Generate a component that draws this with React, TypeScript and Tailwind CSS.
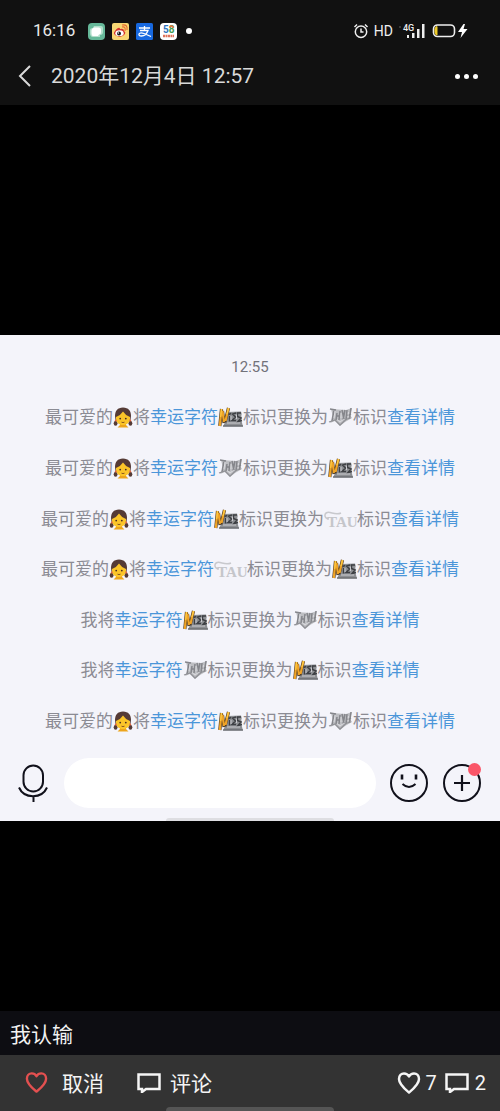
import type { ReactNode } from "react";

function Girl() {
  return (
    <svg viewBox="0 0 20 22" className="inline-block h-[22px] w-5 shrink-0" aria-label="女孩" role="img">
      <path d="M10 1.500C4.500 1.500 2 5 2 10L2.500 14H17.500L18 10C18 5 15.500 1.500 10 1.500Z" fill="#553b36" />
      <ellipse cx="2.600" cy="17.300" rx="1.900" ry="2.500" fill="#553b36" />
      <ellipse cx="17.400" cy="17.300" rx="1.900" ry="2.500" fill="#553b36" />
      <path d="M7 17H13V19L15.500 21.500H4.500L7 19Z" fill="#eda51c" />
      <path d="M3 11Q7.500 9.500 10 5.500Q12.500 9.500 17 11V12.500C17 16.500 14 19 10 19C6 19 3 16.500 3 12.500Z" fill="#fbc529" />
      <circle cx="2.800" cy="14.500" r="1" fill="#e2653f" />
      <circle cx="17.200" cy="14.500" r="1" fill="#e2653f" />
      <circle cx="7.200" cy="12.600" r=".9" fill="#4a2e20" />
      <circle cx="12.800" cy="12.600" r=".9" fill="#4a2e20" />
      <path d="M8.500 16.200Q10 17 11.500 16.200" fill="none" stroke="#7a4a20" strokeWidth=".9" />
    </svg>
  );
}

function GoldMark() {
  return (
    <svg viewBox="0 0 25 22" className="inline-block h-[22px] w-[25px] shrink-0" aria-hidden="true">
      <path d="M9 6L23 5.500L24 9L23.500 15L25 20.500H5L8 14Z" fill="#8d8f93" />
      <path d="M3.500 3L1.800 20M4.500 5L6 17M10.500 2L7 16" stroke="#4a3a28" strokeWidth="3.200" />
      <path d="M3.500 3L1.800 20M4.500 5L6 16M10.500 2L7.500 15" stroke="#f0a426" strokeWidth="2.200" />
      <path d="M3.500 3L2.700 11M10.500 2L9 8" stroke="#ffd34a" strokeWidth="1" />
      <path d="M10.500 8.500L13 7.500M11.500 10V15.500M18 7L14.500 8L17.500 11L14 14.500H18M23 7H19.500V10.500L23 12L20 15.500L24 14.500" fill="none" stroke="#3d3f43" strokeWidth="1.400" />
      <path d="M13 10V14M18.500 8.500V13M23.500 8.500V11M9 17H22" fill="none" stroke="#d2d3d7" strokeWidth=".9" />
      <path d="M5 20H25" stroke="#65676b" strokeWidth="1.200" />
    </svg>
  );
}

function SilverMark() {
  return (
    <svg viewBox="0 0 25 22" className="inline-block h-[22px] w-[25px] shrink-0" aria-hidden="true">
      <path d="M3 3L18 4L24 2L22 9L24 12L17 16L12 20L7 15L2 17L5 11Z" fill="#bdbec2" />
      <path d="M2 3L8 4M6 4L4 15M9 7L8 14M12 5L11 14M9 10H12M14 4L16 13M17 4L15 14M19 4L18 14M23 2L21.500 13M18 10L23 8" fill="none" stroke="#85868b" strokeWidth="1.500" />
      <path d="M1 16L7 14L12 19L18 13.500L22 12" fill="none" stroke="#909196" strokeWidth="1.300" />
      <path d="M7 5L6 12M13 7V12M20.500 6L20 11M9 13.500L12 16L16 13" fill="none" stroke="#e2e2e6" strokeWidth=".8" />
    </svg>
  );
}

function TauMark() {
  return (
    <svg viewBox="0 0 33 22" className="inline-block h-[22px] w-[33px] shrink-0" role="img" aria-label="TAU">
      <path d="M5 11C-1 10 0 3 6 4.500C10 5.500 13 7 17 5" fill="none" stroke="#c8c9cd" strokeWidth="1.500" />
      <text x="3" y="19" fontFamily="Liberation Serif, serif" fontWeight="700" fontSize="15" fill="#c5c6ca">TAU</text>
    </svg>
  );
}

type Mark = "gold" | "silver" | "tau";
const marks: Record<Mark, ReactNode> = { gold: <GoldMark />, silver: <SilverMark />, tau: <TauMark /> };
const notices: { self?: boolean; from: Mark; to: Mark }[] = [
  { from: "gold", to: "silver" },
  { from: "silver", to: "gold" },
  { from: "gold", to: "tau" },
  { from: "tau", to: "gold" },
  { self: true, from: "gold", to: "silver" },
  { self: true, from: "silver", to: "gold" },
  { from: "gold", to: "silver" },
];

function Heart({ className }: { className: string }) {
  return (
    <svg viewBox="0 0 24 24" className={className} fill="none" stroke="currentColor" strokeWidth="2.500" strokeLinejoin="round" aria-hidden="true">
      <path d="M12 21.500C9 19 2 13.500 2 8C2 4.500 4.300 2.500 7 2.500C9.300 2.500 11 3.700 12 5.500C13 3.700 14.700 2.500 17 2.500C19.700 2.500 22 4.500 22 8C22 13.500 15 19 12 21.500Z" />
    </svg>
  );
}

function Bubble() {
  return (
    <svg viewBox="0 0 24 20" className="h-5 w-6" fill="none" stroke="currentColor" strokeWidth="2.500" aria-hidden="true">
      <path d="M1.500 1.500H22.500V16H9L5 19V16H1.500Z" />
    </svg>
  );
}

function StatusBar() {
  return (
    <div className="flex h-[26px] items-center justify-between pl-[33px] pr-[31px]">
      <div className="flex items-center gap-[7px]">
        <span className="mr-[6px] text-[17px] text-[#e9e9e9]">16:16</span>
        <svg viewBox="0 0 17 17" className="size-[17px]" aria-hidden="true">
          <rect width="17" height="17" rx="4" fill="#66b899" />
          <path d="M6 3H13Q15 3 15 5V9Q15 12 12 12V14H5Q2 14 2 10V7Q2 5 5 5Z" fill="#b2dfcb" />
          <path d="M6 4.500H11Q13 4.500 13 7V9Q13 11.500 11 11.500L10 13H5Q3.500 13 3.500 10.500V7.500Q3.500 5.500 6 4.500Z" fill="white" />
        </svg>
        <svg viewBox="0 0 17 17" className="size-[17px]" aria-hidden="true">
          <rect width="17" height="17" rx="2" fill="#f8d774" />
          <path d="M6 5Q8 4 8 6Q12 5 12 8Q14 9 13 11Q10 15 5 13Q0 11 3 8Q4 6 6 5Z" fill="#d6352f" />
          <ellipse cx="7.500" cy="10.200" rx="4.200" ry="2.900" fill="white" />
          <circle cx="7" cy="10.500" r="2" fill="#171717" /><circle cx="6.300" cy="10" r=".7" fill="white" />
          <path d="M10 4Q14 3 13 8M10 2Q16 1 15 7" fill="none" stroke="#e66b2f" strokeWidth="1.100" />
        </svg>
        <svg viewBox="0 0 17 17" className="size-[17px]" aria-hidden="true">
          <rect width="17" height="17" rx="1.500" fill="#1768df" />
          <path d="M3 5H14M8.500 3V7.500M4 7.500H12Q10 13 5.500 13Q2.500 13 3 11Q4 9 8 10.500L15 13.500" fill="none" stroke="white" strokeWidth="1.300" />
        </svg>
        <svg viewBox="0 0 17 17" className="size-[17px]" role="img" aria-label="58">
          <rect width="17" height="17" rx="4" fill="white" />
          <text x="3" y="10" fontSize="10" fontWeight="700" fontFamily="Roboto, sans-serif" fill="#2f74bd">5<tspan fill="#429b50">8</tspan></text>
          <path d="M9.500 4.500Q10 3 11.500 3T13.500 5" fill="none" stroke="#ee713c" strokeWidth="1.300" />
          <path d="M3 13H14" stroke="#df735b" strokeWidth="2.400" strokeDasharray="2 .5" />
        </svg>
        <span className="ml-[2px] size-[6px] rounded-full bg-white" />
      </div>
      <div className="flex items-center text-[#eeeeee]">
        <svg viewBox="0 0 16 16" className="size-4" fill="none" stroke="currentColor" strokeWidth="1.500" aria-label="闹钟" role="img">
          <circle cx="8" cy="8.700" r="5.700" /><path d="M8 5.500V9H10.500M1.500 4L4 1.500M14.500 4L12 1.500" />
        </svg>
        <span className="ml-[5px] text-[14px]">HD</span>
        <svg viewBox="0 0 28 16" className="ml-[5px] h-4 w-7" fill="currentColor" aria-label="4G" role="img">
          <circle cx="2" cy="4" r="1.100" fill="#444" />
          <text x="5" y="8" fontSize="9" fontWeight="500" fontFamily="Roboto, sans-serif">4G</text>
          <path d="M9 12H11V15H9ZM14 10H16.500V15H14ZM19 6H21.500V15H19ZM24 1H26.500V15H24Z" />
        </svg>
        <svg viewBox="0 0 37 16" className="ml-[6px] h-4 w-[37px]" aria-label="电量低，充电中" role="img">
          <rect x="1.500" y="2" width="21" height="11.500" rx="4" fill="none" stroke="#eee" strokeWidth="1.600" />
          <path d="M5 3.500V12Q3 12 3 9V6Q3 4 5 3.500Z" fill="#f0cc29" stroke="#f0cc29" />
          <path d="M31.500 1L26 9H30L28.500 15L35.500 6H31.500L33 1Z" fill="white" />
        </svg>
      </div>
    </div>
  );
}

export default function App() {
  return (
    <main className="flex min-h-screen flex-col bg-black font-[Roboto,'Noto_Sans_CJK_SC',sans-serif]">
      <header className="bg-[#111111] pb-[9px] pt-[18px]">
        <StatusBar />
        <div className="mt-3 flex h-10 items-center pl-[17px] pr-[22px] text-[#d9d9d9]">
          <button aria-label="返回" className="mr-[16px] flex h-8 w-[18px] items-center">
            <svg viewBox="0 0 18 24" className="h-6 w-[18px]" fill="none" stroke="currentColor" strokeWidth="2"><path d="M13 2L3 12L13 22" /></svg>
          </button>
          <h1 className="text-[21px] leading-8">2020年12月4日 12:57</h1>
          <button aria-label="更多" className="ml-auto flex h-8 items-center gap-1 text-white">
            <span className="size-[5px] rounded-full bg-current" />
            <span className="size-[5px] rounded-full bg-current" />
            <span className="size-[5px] rounded-full bg-current" />
          </button>
        </div>
      </header>

      <div className="grow-[229] basis-0" />
      <section className="bg-[#f4f4fa]">
        <p className="pb-3 pt-5 text-center text-[15px] leading-6 text-[#72727a]">12:55</p>
        <ul className="grid min-h-[355px] auto-rows-fr pt-px text-[17px] leading-6 text-[#8b8b93]">
          {notices.map((n, i) => (
            <li key={i} className="flex items-center justify-center whitespace-nowrap">
              {n.self ? <span>我</span> : <><span>最可爱的</span><Girl /></>}
              <span>将</span>
              <span className="text-[#4b96d9]">幸运字符</span>
              {marks[n.from]}
              <span>标识更换为</span>
              {marks[n.to]}
              <span>标识</span>
              <a href="#details" className="text-[#4b96d9]">查看详情</a>
            </li>
          ))}
        </ul>
        <div className="flex items-center pl-[18px] pr-[19px] pt-3 text-[#11111b]">
          <button aria-label="语音输入" className="mr-4">
            <svg viewBox="0 0 30 40" className="h-10 w-[30px]" fill="none" stroke="currentColor" strokeWidth="2">
              <rect x="5.500" y="2.500" width="19.500" height="26" rx="9.750" /><path d="M1 24.500C6 36 24 36 29 24.500M15.500 33V39" />
            </svg>
          </button>
          <input aria-label="消息" className="h-[50px] min-w-0 flex-1 rounded-full bg-white px-5 text-[16px] outline-none" />
          <button aria-label="表情" className="ml-[14px]">
            <svg viewBox="0 0 38 38" className="size-[38px]" fill="none" stroke="currentColor" strokeWidth="2">
              <circle cx="19" cy="19" r="18" /><path d="M12 10.500V15.500M26 10.500V15.500" strokeWidth="2.600" /><path d="M12.500 20Q19 26 25.500 20" />
            </svg>
          </button>
          <button aria-label="更多功能" className="relative ml-[15px]">
            <svg viewBox="0 0 38 38" className="size-[38px]" fill="none" stroke="currentColor" strokeWidth="2">
              <circle cx="19" cy="19" r="18" /><path d="M11 19H27M19 11V27" strokeWidth="2.200" />
            </svg>
            <span className="absolute -top-px right-0 size-[13px] rounded-full bg-[#fa5668]" />
          </button>
        </div>
        <div className="mx-auto mt-[10px] h-[3px] w-[168px] rounded-t-full bg-[#dedee2]" />
      </section>
      <div className="grow-[189] basis-0" />

      <p className="bg-[#0d0d12] px-[10px] pb-1 pt-2 text-[21px] leading-8 text-[#f2f2f2]">我认输</p>
      <footer className="bg-[#333333] text-[#f5f5f5]">
        <div className="flex h-[52px] items-center pl-[25px] pr-[14px] pt-[3px]">
          <button className="flex items-center gap-[14px] text-[21px]">
            <Heart className="size-[23px] text-[#e35050]" /><span className="pt-1">取消</span>
          </button>
          <button className="ml-[33px] flex items-center gap-[9px] text-[21px]"><Bubble /><span className="pt-1">评论</span></button>
          <div className="ml-auto flex items-center gap-[8px] text-[20px]">
            <button aria-label="7个赞" className="flex items-center gap-[5px]"><Heart className="size-6" />7</button>
            <button aria-label="2条评论" className="flex items-center gap-[6px]"><Bubble />2</button>
          </div>
        </div>
        <div className="mx-auto h-1 w-[168px] rounded-t-full bg-[#555555]" />
      </footer>
    </main>
  );
}
